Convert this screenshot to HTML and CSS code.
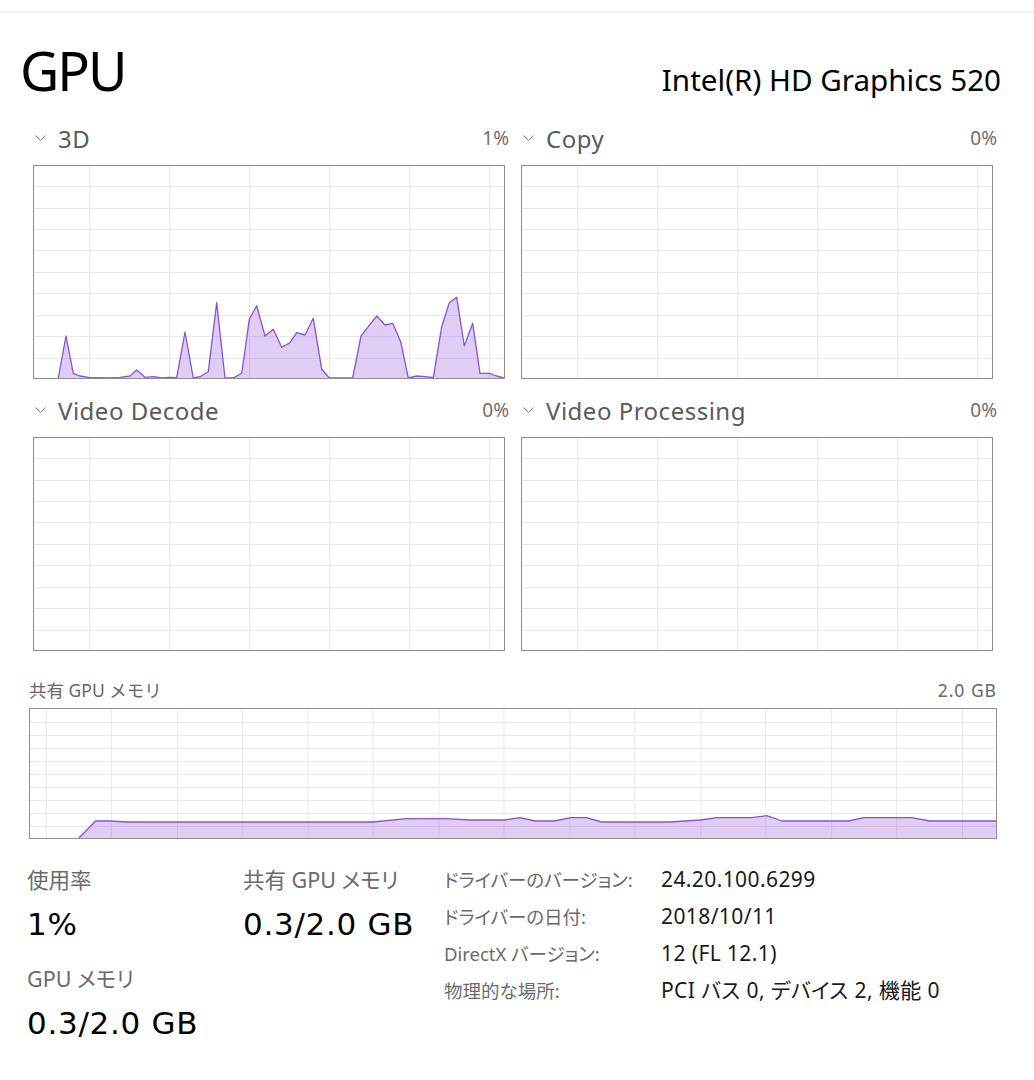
FILE: index.html
```html
<!DOCTYPE html>
<html lang="ja">
<head>
<meta charset="utf-8">
<title>GPU</title>
<link rel="stylesheet" href="styles.css">
</head>
<body>
<div class="topline"></div>
<header class="head">
  <h1 class="title">GPU</h1>
  <div class="model">Intel(R) HD Graphics 520</div>
</header>

<section class="engines">
  <div class="panel">
    <div class="ph"><span class="pname"><svg class="chev" viewBox="0 0 11 6"><path d="M0.5 0.5L5.5 5.5L10.5 0.5"/></svg>3D</span><span class="pct">1%</span></div>
    <div class="chart">
      <svg viewBox="0 0 470 212" preserveAspectRatio="none">
        <path class="grid" d="M55.5 0V212M135.5 0V212M215.5 0V212M295.5 0V212M375.5 0V212M455.5 0V212M0 20.5H470M0 42.5H470M0 63.5H470M0 84.5H470M0 106.5H470M0 127.5H470M0 149.5H470M0 170.5H470M0 192.5H470"/>
        <path class="fill" d="M24.3 212L32 170L39.3 207.3L46 210L54.3 211.3L66 211.7L76 212L86 211.3L96 210L102.7 204L111 211.3L119.3 210.7L127.7 212L136 211.3L142.7 211.7L151 166L159.3 212L166 210.7L174.3 205.7L182.7 136.7L191 212L199.3 212L207.7 207.3L215.3 153.3L222.7 139.7L231 170L239.3 163.3L247.7 181.3L256 176.7L262.7 166.7L271 169L279.3 152.3L287.7 203.3L295.3 212L318.7 212L327 170L334.3 160.7L342.7 150L351 159L358.7 157.3L366.7 175.7L374.3 212L382.7 210L391 210.7L399.3 211.7L407.7 160.7L415.3 136.7L422.7 131.3L430.3 180L438.7 157.3L446 207.3L455.3 207.3L462.7 210L470 212Z"/>
        <path class="line" d="M24.3 212L32 170L39.3 207.3L46 210L54.3 211.3L66 211.7L76 212L86 211.3L96 210L102.7 204L111 211.3L119.3 210.7L127.7 212L136 211.3L142.7 211.7L151 166L159.3 212L166 210.7L174.3 205.7L182.7 136.7L191 212L199.3 212L207.7 207.3L215.3 153.3L222.7 139.7L231 170L239.3 163.3L247.7 181.3L256 176.7L262.7 166.7L271 169L279.3 152.3L287.7 203.3L295.3 212L318.7 212L327 170L334.3 160.7L342.7 150L351 159L358.7 157.3L366.7 175.7L374.3 212L382.7 210L391 210.7L399.3 211.7L407.7 160.7L415.3 136.7L422.7 131.3L430.3 180L438.7 157.3L446 207.3L455.3 207.3L462.7 210L470 212"/>
      </svg>
    </div>
  </div>
  <div class="panel">
    <div class="ph"><span class="pname"><svg class="chev" viewBox="0 0 11 6"><path d="M0.5 0.5L5.5 5.5L10.5 0.5"/></svg>Copy</span><span class="pct">0%</span></div>
    <div class="chart">
      <svg viewBox="0 0 470 212" preserveAspectRatio="none">
        <path class="grid" d="M55.5 0V212M135.5 0V212M215.5 0V212M295.5 0V212M375.5 0V212M455.5 0V212M0 20.5H470M0 42.5H470M0 63.5H470M0 84.5H470M0 106.5H470M0 127.5H470M0 149.5H470M0 170.5H470M0 192.5H470"/>
      </svg>
    </div>
  </div>
  <div class="panel">
    <div class="ph"><span class="pname"><svg class="chev" viewBox="0 0 11 6"><path d="M0.5 0.5L5.5 5.5L10.5 0.5"/></svg>Video Decode</span><span class="pct">0%</span></div>
    <div class="chart">
      <svg viewBox="0 0 470 212" preserveAspectRatio="none">
        <path class="grid" d="M55.5 0V212M135.5 0V212M215.5 0V212M295.5 0V212M375.5 0V212M455.5 0V212M0 20.5H470M0 42.5H470M0 63.5H470M0 84.5H470M0 106.5H470M0 127.5H470M0 149.5H470M0 170.5H470M0 192.5H470"/>
      </svg>
    </div>
  </div>
  <div class="panel">
    <div class="ph"><span class="pname"><svg class="chev" viewBox="0 0 11 6"><path d="M0.5 0.5L5.5 5.5L10.5 0.5"/></svg>Video Processing</span><span class="pct">0%</span></div>
    <div class="chart">
      <svg viewBox="0 0 470 212" preserveAspectRatio="none">
        <path class="grid" d="M55.5 0V212M135.5 0V212M215.5 0V212M295.5 0V212M375.5 0V212M455.5 0V212M0 20.5H470M0 42.5H470M0 63.5H470M0 84.5H470M0 106.5H470M0 127.5H470M0 149.5H470M0 170.5H470M0 192.5H470"/>
      </svg>
    </div>
  </div>
</section>

<section class="shared">
  <div class="sh"><span>共有 GPU メモリ</span><span class="shv">2.0 GB</span></div>
  <div class="chart mem">
    <svg viewBox="0 0 967 129" preserveAspectRatio="none">
      <path class="grid" d="M16.5 0V129M81.5 0V129M147.5 0V129M212.5 0V129M278.5 0V129M343.5 0V129M409.5 0V129M474.5 0V129M540.5 0V129M605.5 0V129M671.5 0V129M736.5 0V129M802.5 0V129M867.5 0V129M933.5 0V129M0 13.5H967M0 26.5H967M0 39.5H967M0 52.5H967M0 65.5H967M0 78.5H967M0 91.5H967M0 104.5H967M0 117.5H967"/>
      <path class="fill" d="M49 129L65.7 112L80 112L96.7 113L343.3 113L376.7 109.7L416.7 109.7L440 111L475 111L490.4 108.7L505.8 112L524.5 112L541.6 108.7L556.9 108.7L572.2 113L640.4 113L671 111L688 108.7L722 108.7L737.5 106.7L752.8 112L819.2 112L834.6 108.7L882.3 108.7L901 112L967 112V129Z"/>
      <path class="line" d="M49 129L65.7 112L80 112L96.7 113L343.3 113L376.7 109.7L416.7 109.7L440 111L475 111L490.4 108.7L505.8 112L524.5 112L541.6 108.7L556.9 108.7L572.2 113L640.4 113L671 111L688 108.7L722 108.7L737.5 106.7L752.8 112L819.2 112L834.6 108.7L882.3 108.7L901 112L967 112"/>
    </svg>
  </div>
</section>

<section class="stats">
  <div class="col c1">
    <div class="stat">
      <div class="slabel jp">使用率</div>
      <div class="sval">1%</div>
    </div>
    <div class="stat">
      <div class="slabel jp">GPU メモリ</div>
      <div class="sval">0.3/2.0 GB</div>
    </div>
  </div>
  <div class="col c2">
    <div class="stat">
      <div class="slabel jp">共有 GPU メモリ</div>
      <div class="sval">0.3/2.0 GB</div>
    </div>
  </div>
  <dl class="info">
    <dt class="jp">ドライバーのバージョン:</dt><dd>24.20.100.6299</dd>
    <dt class="jp">ドライバーの日付:</dt><dd>2018/10/11</dd>
    <dt class="jp">DirectX バージョン:</dt><dd>12 (FL 12.1)</dd>
    <dt class="jp">物理的な場所:</dt><dd class="jp">PCI バス 0, デバイス 2, 機能 0</dd>
  </dl>
</section>
</body>
</html>
```

FILE: styles.css
```css
* { box-sizing: border-box; }

body {
  margin: 0;
  background: #ffffff;
  color: #000000;
  font-family: "Noto Sans", "Noto Sans CJK JP", sans-serif;
}

.jp { font-feature-settings: "palt"; }

.topline {
  height: 13px;
  border-bottom: 2px solid #f0f0f0;
}

.head {
  display: flex;
  justify-content: space-between;
  align-items: baseline;
  height: 64px;
  margin-top: 25px;
  padding: 0 33px 0 20px;
}

.title {
  margin: 0;
  font-size: 54px;
  font-weight: 400;
  line-height: 64px;
  letter-spacing: -2px;
}

.model {
  font-size: 29.6px;
  line-height: 64px;
}

.engines {
  display: grid;
  grid-template-columns: 472px 472px;
  column-gap: 16px;
  row-gap: 17px;
  margin-top: 22px;
  padding-left: 33px;
}

.ph {
  display: flex;
  justify-content: space-between;
  align-items: flex-start;
  height: 32px;
  margin: 0 -4px 9px 0;
  padding-left: 2px;
}

.pname {
  font-size: 24px;
  line-height: 30px;
  letter-spacing: 0.5px;
  color: #5a5a5a;
}

.pct {
  font-size: 19px;
  line-height: 29px;
  color: #6e6e6e;
}

.chev {
  width: 11px;
  height: 6px;
  margin-right: 12px;
  vertical-align: 7px;
  fill: none;
  stroke: #7a7a7a;
  stroke-width: 1;
}

.chart {
  height: 214px;
  border: 1px solid #8f8f8f;
  background: #ffffff;
}

.chart svg {
  display: block;
  width: 100%;
  height: 100%;
}

.grid {
  fill: none;
  stroke: #e8e8e8;
  stroke-width: 1;
}

.fill {
  fill: rgba(150, 90, 225, 0.3);
  stroke: none;
}

.line {
  fill: none;
  stroke: #8a52d4;
  stroke-width: 1.3;
  stroke-linejoin: round;
}

.shared {
  margin: 29px 37px 0 29px;
}

.sh {
  display: flex;
  justify-content: space-between;
  height: 20px;
  margin-bottom: 8px;
  font-size: 17.5px;
  line-height: 20px;
  color: #666666;
}

.shv { letter-spacing: 1px; }

.chart.mem {
  height: 131px;
}

.stats {
  display: flex;
  align-items: flex-start;
  margin-top: 22px;
  padding-left: 27px;
}

.col {
  padding-top: 5px;
}

.c1 { width: 216px; }
.c2 { width: 201px; }

.stat + .stat { margin-top: 21px; }

.slabel {
  font-size: 21.5px;
  line-height: 28px;
  color: #6a6a6a;
}

.sval {
  margin-top: 10px;
  font-family: "DejaVu Sans", "Noto Sans", sans-serif;
  font-size: 31px;
  line-height: 40px;
  letter-spacing: 0.7px;
}

.info {
  display: grid;
  grid-template-columns: 217px auto;
  align-items: baseline;
  margin: 0;
  line-height: 37px;
}

.info dt {
  font-size: 18.5px;
  color: #6a6a6a;
}

.info dd {
  margin: 0;
  font-size: 21px;
  letter-spacing: 0.4px;
  color: #1a1a1a;
}
```
